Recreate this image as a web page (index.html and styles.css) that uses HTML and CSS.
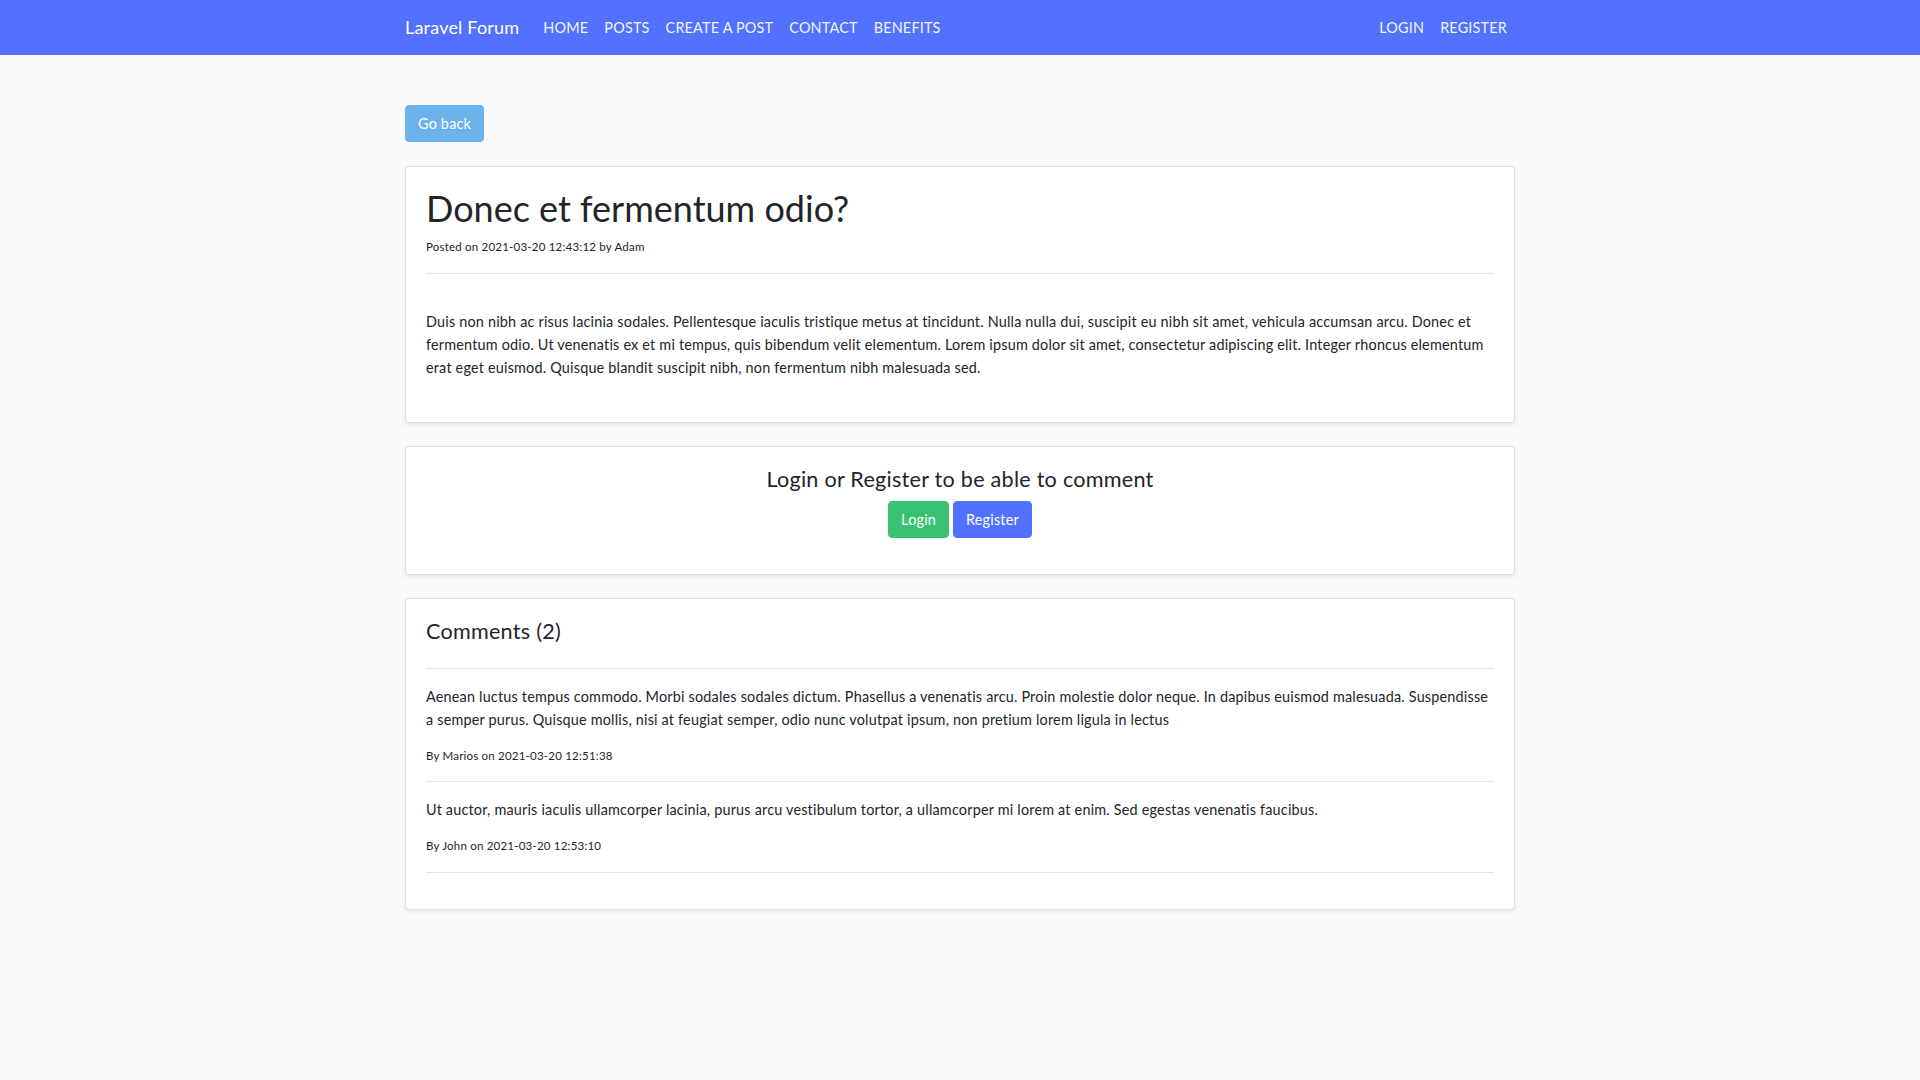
FILE: index.html
```html
<!DOCTYPE html>
<html lang="en">
<head>
<meta charset="utf-8">
<title>Laravel Forum</title>
<link rel="stylesheet" href="styles.css">
</head>
<body>
<nav class="navbar">
  <div class="container nav-inner">
    <a class="brand" href="#">Laravel Forum</a>
    <ul class="nav-list">
      <li><a class="nav-link" href="#">HOME</a></li>
      <li><a class="nav-link" href="#">POSTS</a></li>
      <li><a class="nav-link" href="#">CREATE A POST</a></li>
      <li><a class="nav-link" href="#">CONTACT</a></li>
      <li><a class="nav-link" href="#">BENEFITS</a></li>
    </ul>
    <ul class="nav-list nav-right">
      <li><a class="nav-link" href="#">LOGIN</a></li>
      <li><a class="nav-link" href="#">REGISTER</a></li>
    </ul>
  </div>
</nav>
<main class="main">
  <div class="container">
    <div class="back-row"><a class="btn btn-info" href="#">Go back</a></div>

    <div class="card">
      <div class="card-body post-body">
        <h1 class="post-title">Donec et fermentum odio?</h1>
        <small class="meta">Posted on 2021-03-20 12:43:12 by Adam</small>
        <hr class="rule">
        <p class="post-text">Duis non nibh ac risus lacinia sodales. Pellentesque iaculis tristique metus at tincidunt. Nulla nulla dui, suscipit eu nibh sit amet, vehicula accumsan arcu. Donec et fermentum odio. Ut venenatis ex et mi tempus, quis bibendum velit elementum. Lorem ipsum dolor sit amet, consectetur adipiscing elit. Integer rhoncus elementum erat eget euismod. Quisque blandit suscipit nibh, non fermentum nibh malesuada sed.</p>
      </div>
    </div>

    <div class="card">
      <div class="card-body center-body">
        <h4 class="heading">Login or Register to be able to comment</h4>
        <div class="btn-row">
          <a class="btn btn-success" href="#">Login</a>
          <a class="btn btn-primary" href="#">Register</a>
        </div>
      </div>
    </div>

    <div class="card">
      <div class="card-body">
        <h4 class="heading comments-heading">Comments (2)</h4>
        <hr class="rule">
        <div class="comment">
          <p class="comment-text">Aenean luctus tempus commodo. Morbi sodales sodales dictum. Phasellus a venenatis arcu. Proin molestie dolor neque. In dapibus euismod malesuada. Suspendisse a semper purus. Quisque mollis, nisi at feugiat semper, odio nunc volutpat ipsum, non pretium lorem ligula in lectus</p>
          <small class="meta">By Marios on 2021-03-20 12:51:38</small>
        </div>
        <hr class="rule">
        <div class="comment">
          <p class="comment-text">Ut auctor, mauris iaculis ullamcorper lacinia, purus arcu vestibulum tortor, a ullamcorper mi lorem at enim. Sed egestas venenatis faucibus.</p>
          <small class="meta">By John on 2021-03-20 12:53:10</small>
        </div>
        <hr class="rule">
      </div>
    </div>
  </div>
</main>
</body>
</html>
```

FILE: styles.css
```css
* { box-sizing: border-box; }
html, body { margin: 0; padding: 0; }
body {
  font-family: "Lato", "Open Sans", "Liberation Sans", sans-serif;
  font-size: 14.4px;
  line-height: 1.6;
  letter-spacing: 0.2px;
  color: #212529;
  background: #f8fafc;
  min-height: 1080px;
}
a { text-decoration: none; }

.container {
  width: 1140px;
  margin: 0 auto;
  padding: 0 15px;
}

.navbar {
  background: #5271ff;
  height: 55px;
  padding: 8px 0;
}
.nav-inner {
  display: flex;
  align-items: center;
  height: 39px;
}
.brand {
  color: #fff;
  font-size: 18px;
  line-height: 28.8px;
  margin-right: 16px;
}
.nav-list {
  list-style: none;
  margin: 0;
  padding: 0;
  display: flex;
}
.nav-right { margin-left: auto; }
.nav-link {
  display: block;
  color: rgba(255,255,255,0.95);
  padding: 8px 8px;
  line-height: 23px;
}

.main { padding-top: 50px; }
.back-row { margin-bottom: 24px; }

.btn {
  display: inline-block;
  padding: 6px 12px;
  border: 1px solid transparent;
  border-radius: 4px;
  font-size: 14.4px;
  line-height: 23px;
  color: #fff;
  vertical-align: top;
}
.btn-info { background: #6cb2eb; border-color: #6cb2eb; color: #fff; }
.btn-success { background: #38c172; border-color: #38c172; }
.btn-primary { background: #5271ff; border-color: #5271ff; }

.card {
  background: #fff;
  border: 1px solid rgba(0,0,0,0.125);
  border-radius: 4px;
  box-shadow: 0 2px 4px rgba(0,0,0,0.075);
  margin-bottom: 23px;
}
.card-body { padding: 20px; }
.post-body { padding-bottom: 27px; }

.post-title {
  font-size: 36px;
  font-weight: 400;
  line-height: 1.2;
  letter-spacing: 0;
  margin: 0 0 8px;
}
.meta {
  display: block;
  font-size: 11.52px;
  line-height: 18.4px;
}
.rule {
  border: 0;
  border-top: 1px solid rgba(0,0,0,0.1);
  margin: 16px 0;
  height: 0;
}
.post-text { margin: 36px 0 16px; }

.heading {
  font-size: 21.6px;
  font-weight: 400;
  line-height: 1.2;
  letter-spacing: 0.25px;
  margin: 0 0 8px;
}
.comments-heading { margin-bottom: 23px; }
.center-body { text-align: center; }
.btn-row {
  display: flex;
  justify-content: center;
  gap: 4px;
  margin-bottom: 16px;
}
.comment-text { margin: 0 0 16px; }
```
